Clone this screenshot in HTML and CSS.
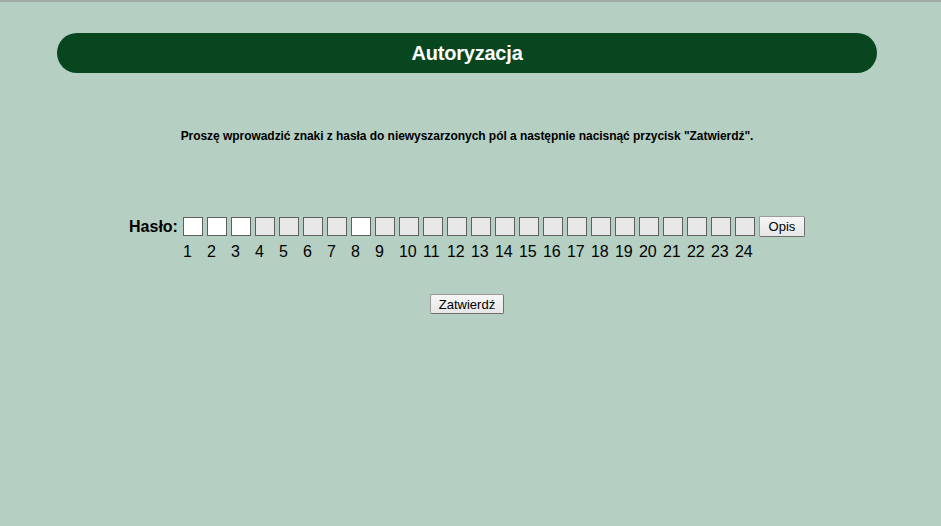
FILE: index.html
```html
<!DOCTYPE html>
<html lang="pl">
<head>
  <meta charset="UTF-8" />
  <title>Autoryzacja</title>
  <link rel="stylesheet" href="styles.css">
</head>
<body>
  <div class="page">
    <h1 class="title-bar">Autoryzacja</h1>

    <p class="info">Proszę wprowadzić znaki z hasła do niewyszarzonych pól a następnie nacisnąć przycisk "Zatwierdź".</p>

    <form class="login">
      <div class="pass-grid">
        <label class="pass-label">Hasło:</label>
        <input type="password" class="char" maxlength="1">
        <input type="password" class="char" maxlength="1">
        <input type="password" class="char" maxlength="1">
        <input type="password" class="char" maxlength="1" disabled>
        <input type="password" class="char" maxlength="1" disabled>
        <input type="password" class="char" maxlength="1" disabled>
        <input type="password" class="char" maxlength="1" disabled>
        <input type="password" class="char" maxlength="1">
        <input type="password" class="char" maxlength="1" disabled>
        <input type="password" class="char" maxlength="1" disabled>
        <input type="password" class="char" maxlength="1" disabled>
        <input type="password" class="char" maxlength="1" disabled>
        <input type="password" class="char" maxlength="1" disabled>
        <input type="password" class="char" maxlength="1" disabled>
        <input type="password" class="char" maxlength="1" disabled>
        <input type="password" class="char" maxlength="1" disabled>
        <input type="password" class="char" maxlength="1" disabled>
        <input type="password" class="char" maxlength="1" disabled>
        <input type="password" class="char" maxlength="1" disabled>
        <input type="password" class="char" maxlength="1" disabled>
        <input type="password" class="char" maxlength="1" disabled>
        <input type="password" class="char" maxlength="1" disabled>
        <input type="password" class="char" maxlength="1" disabled>
        <input type="password" class="char" maxlength="1" disabled>
        <button type="button" class="btn btn-opis">Opis</button>

        <span></span>
        <span class="num">1</span><span class="num">2</span><span class="num">3</span><span class="num">4</span>
        <span class="num">5</span><span class="num">6</span><span class="num">7</span><span class="num">8</span>
        <span class="num">9</span><span class="num">10</span><span class="num">11</span><span class="num">12</span>
        <span class="num">13</span><span class="num">14</span><span class="num">15</span><span class="num">16</span>
        <span class="num">17</span><span class="num">18</span><span class="num">19</span><span class="num">20</span>
        <span class="num">21</span><span class="num">22</span><span class="num">23</span><span class="num">24</span>
        <span></span>
      </div>

      <div class="submit-row">
        <button type="button" class="btn btn-submit">Zatwierdź</button>
      </div>
    </form>
  </div>
</body>
</html>
```

FILE: styles.css
```css
* {
  box-sizing: border-box;
  margin: 0;
  padding: 0;
}

body {
  background: #b5cfc2;
  border-top: 2px solid #a4aaa7;
  font-family: "Liberation Sans", Arial, sans-serif;
  color: #000;
  min-height: 100vh;
}

.page {
  padding: 31px 7px 0 0;
}

.title-bar {
  width: 820px;
  height: 40px;
  margin: 0 auto;
  background: #08461f;
  border-radius: 20px;
  color: #fff;
  font-size: 20px;
  font-weight: bold;
  line-height: 40px;
  text-align: center;
  letter-spacing: -0.2px;
}

.info {
  margin-top: 55px;
  font-size: 12px;
  font-weight: bold;
  text-align: center;
  line-height: 16px;
  letter-spacing: -0.05px;
}

.login {
  margin-top: 72px;
}

.pass-grid {
  display: grid;
  grid-template-columns: auto repeat(24, 24px) auto;
  align-items: center;
  justify-content: center;
  row-gap: 6px;
}

.pass-label {
  font-size: 16px;
  font-weight: bold;
  padding-right: 5px;
}

.char {
  width: 20px;
  height: 19px;
  border: 1px solid #5f5f5f;
  background: #fff;
  font-size: 12px;
  text-align: center;
}

.char:disabled {
  background: #e8e8e8;
}

.num {
  font-size: 16px;
  line-height: 18px;
}

.btn {
  font-family: "Liberation Sans", Arial, sans-serif;
  font-size: 13px;
  color: #000;
  background: linear-gradient(#f6f6f6, #e6e6e6);
  border: 1px solid #9a9a9a;
  border-right-color: #6f6f6f;
  border-bottom-color: #6f6f6f;
  border-radius: 2px;
  cursor: pointer;
}

.btn-opis {
  width: 46px;
  height: 21px;
}

.submit-row {
  margin-top: 33px;
  text-align: center;
}

.btn-submit {
  width: 74px;
  height: 20px;
}
```
